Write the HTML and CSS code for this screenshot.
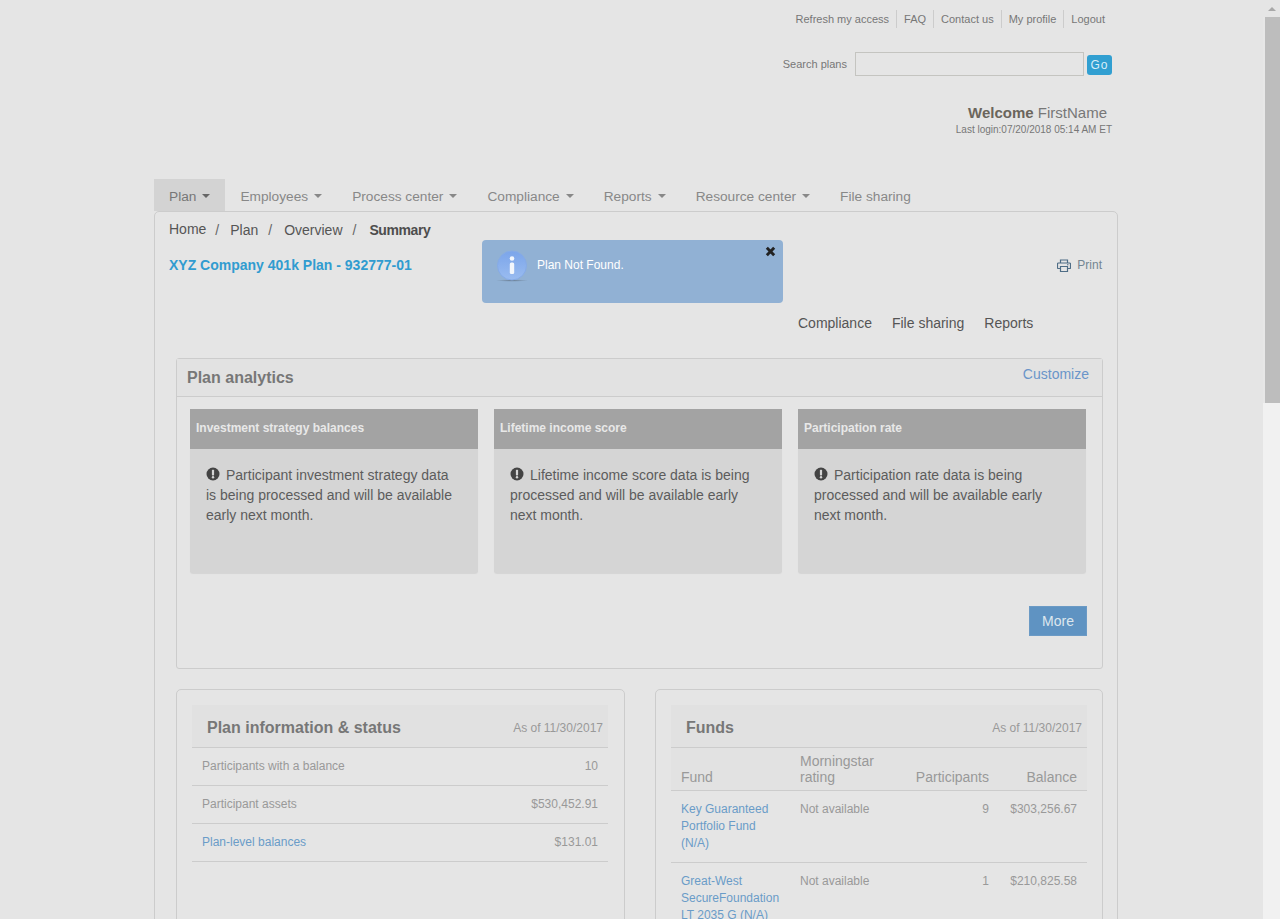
FILE: index.html
```html
<!DOCTYPE html>
<html lang="en">
<head>
<meta charset="utf-8">
<title>Plan Summary</title>
<link rel="stylesheet" href="styles.css">
</head>
<body>
<div class="page">
  <div class="wrap">
    <header class="site-head">
      <ul class="top-links">
        <li>Refresh my access</li><li>FAQ</li><li>Contact us</li><li>My profile</li><li>Logout</li>
      </ul>
      <div class="search">
        <label class="search-label">Search plans</label>
        <input class="search-input" type="text">
        <button class="go">Go</button>
      </div>
      <div class="welcome"><b>Welcome</b> FirstName</div>
      <div class="last-login">Last login:07/20/2018 05:14 AM ET</div>
    </header>

    <nav class="tabs">
      <a class="tab active">Plan<i class="caret"></i></a>
      <a class="tab">Employees<i class="caret"></i></a>
      <a class="tab">Process center<i class="caret"></i></a>
      <a class="tab">Compliance<i class="caret"></i></a>
      <a class="tab">Reports<i class="caret"></i></a>
      <a class="tab">Resource center<i class="caret"></i></a>
      <a class="tab">File sharing</a>
    </nav>

    <main class="panel">
      <div class="crumbs">
        <span class="crumb-home">Home</span><span class="sep sep-first">/</span><span>Plan</span><span class="sep">/</span><span>Overview</span><span class="sep">/</span><b>Summary</b>
      </div>
      <div class="title-row">
        <a class="plan-title">XYZ Company 401k Plan - 932777-01</a>
        <a class="print">
          <svg class="print-icon" viewBox="0 0 14 13" width="14" height="13" aria-hidden="true"><path d="M3.5 4V1h7v3M3.5 9.5H1.2a.7.7 0 0 1-.7-.7V5a1 1 0 0 1 1-1h11a1 1 0 0 1 1 1v3.800a.7.700 0 0 1-.7.7h-2.300M3.500 7.500h7v5h-7z" fill="none" stroke="#4f6d86" stroke-width="1.200"/><circle cx="10.800" cy="5.800" r=".7" fill="#4f6d86"/></svg>
          Print
        </a>
      </div>
      <div class="alert">
        <svg class="alert-icon" viewBox="0 0 32 32" width="32" height="32" aria-hidden="true">
          <defs>
            <linearGradient id="infoFill" x1="0" y1="0" x2="0" y2="1"><stop offset="0" stop-color="#7ba5ea"/><stop offset="1" stop-color="#9abcf0"/></linearGradient>
            <radialGradient id="infoShade" cx=".5" cy=".5" r=".5"><stop offset="0" stop-color="#5f6f80" stop-opacity=".75"/><stop offset="1" stop-color="#5f6f80" stop-opacity="0"/></radialGradient>
          </defs>
          <ellipse cx="16" cy="30.500" rx="16" ry="1.300" fill="url(#infoShade)"/>
          <circle cx="16" cy="15.500" r="14.500" fill="url(#infoFill)" stroke="#86abe6" stroke-width="1"/>
          <circle cx="16" cy="8.500" r="2.300" fill="#f2f6fc"/>
          <rect x="13.800" y="12.500" width="4.400" height="11.500" rx="1.500" fill="#f2f6fc"/>
        </svg>
        <span class="alert-text">Plan Not Found.</span>
        <svg class="alert-close" viewBox="0 0 12 12" width="11" height="11" aria-hidden="true"><path d="M2 2 10 10M10 2 2 10" stroke="#222" stroke-width="3.200"/></svg>
      </div>
      <div class="subnav"><a>Compliance</a><a>File sharing</a><a>Reports</a></div>

      <section class="analytics">
        <div class="analytics-head">
          <h2 class="analytics-title">Plan analytics</h2>
          <a class="customize">Customize</a>
        </div>
        <div class="cards">
          <article class="card">
            <h3 class="card-head">Investment strategy balances</h3>
            <p class="card-body"><svg class="warn" viewBox="0 0 14 14" width="14" height="14" aria-hidden="true"><circle cx="7" cy="7" r="6.500" fill="#444"/><rect x="5.900" y="2.800" width="2.200" height="5.600" rx=".6" fill="#d5d5d5"/><circle cx="7" cy="10.300" r="1.200" fill="#d5d5d5"/></svg>Participant investment strategy data is being processed and will be available early next month.</p>
          </article>
          <article class="card">
            <h3 class="card-head">Lifetime income score</h3>
            <p class="card-body"><svg class="warn" viewBox="0 0 14 14" width="14" height="14" aria-hidden="true"><circle cx="7" cy="7" r="6.500" fill="#444"/><rect x="5.900" y="2.800" width="2.200" height="5.600" rx=".6" fill="#d5d5d5"/><circle cx="7" cy="10.300" r="1.200" fill="#d5d5d5"/></svg>Lifetime income score data is being processed and will be available early next month.</p>
          </article>
          <article class="card">
            <h3 class="card-head">Participation rate</h3>
            <p class="card-body"><svg class="warn" viewBox="0 0 14 14" width="14" height="14" aria-hidden="true"><circle cx="7" cy="7" r="6.500" fill="#444"/><rect x="5.900" y="2.800" width="2.200" height="5.600" rx=".6" fill="#d5d5d5"/><circle cx="7" cy="10.300" r="1.200" fill="#d5d5d5"/></svg>Participation rate data is being processed and will be available early next month.</p>
          </article>
        </div>
        <div class="more-row"><button class="more">More</button></div>
      </section>

      <div class="lower">
        <section class="box box-left">
          <div class="box-head"><h2 class="box-title">Plan information &amp; status</h2><span class="as-of">As of 11/30/2017</span></div>
          <div class="info-row"><span>Participants with a balance</span><span>10</span></div>
          <div class="info-row"><span>Participant assets</span><span>$530,452.91</span></div>
          <div class="info-row"><a class="link">Plan-level balances</a><span>$131.01</span></div>
        </section>
        <section class="box">
          <div class="box-head"><h2 class="box-title">Funds</h2><span class="as-of">As of 11/30/2017</span></div>
          <table class="funds">
            <colgroup><col class="c1"><col class="c2"><col class="c3"><col class="c4"></colgroup>
            <thead><tr><th>Fund</th><th>Morningstar rating</th><th class="num">Participants</th><th class="num">Balance</th></tr></thead>
            <tbody>
              <tr><td><a class="link">Key Guaranteed Portfolio Fund (N/A)</a></td><td>Not available</td><td class="num">9</td><td class="num">$303,256.67</td></tr>
              <tr><td><a class="link">Great-West SecureFoundation LT 2035 G (N/A)</a></td><td>Not available</td><td class="num">1</td><td class="num">$210,825.58</td></tr>
            </tbody>
          </table>
        </section>
      </div>
    </main>
  </div>
</div>
<div class="scrollbar">
  <div class="scroll-btn"><i class="scroll-arrow"></i></div>
  <div class="scroll-thumb"></div>
</div>
</body>
</html>
```
FILE: styles.css
```css
* { box-sizing: border-box; }
html, body { margin: 0; height: 919px; overflow: hidden; }
body {
  display: flex;
  background: #e5e5e5;
  font-family: "Liberation Sans", Arial, sans-serif;
  color: #888;
}
.page { width: 1263px; height: 919px; overflow: hidden; flex: none; }
.wrap { width: 964px; margin-left: 154px; }

.scrollbar { width: 17px; height: 919px; background: #f1f1f1; flex: none; }
.scroll-btn { height: 17px; background: #e5e5e5; display: flex; align-items: center; justify-content: center; }
.scroll-arrow { width: 0; height: 0; border-left: 4px solid transparent; border-right: 4px solid transparent; border-bottom: 4px solid #a8a8a8; }
.scroll-thumb { width: 17px; height: 386px; background: #bdbdbd; border-left: 2px solid #e7e7e7; }

.site-head { height: 179px; padding-top: 10px; display: flex; flex-direction: column; align-items: flex-end; }
.top-links { list-style: none; margin: 0; padding: 0 6px 0 0; display: flex; font-size: 11px; color: #777; }
.top-links li { height: 18px; line-height: 18px; padding: 0 7px; border-left: 1px solid #ccc; }
.top-links li:first-child { border-left: 0; }
.search { display: flex; align-items: center; margin-top: 24px; padding-right: 6px; height: 24px; }
.search-label { font-size: 11px; color: #777; margin-right: 8px; }
.search-input { width: 229px; height: 24px; background: #e5e5e5; border: 1px solid #c4c4c0; margin: 0; padding: 0; }
.go { width: 25px; height: 20px; margin: 2px 0 0 3px; padding: 0; border: 0; border-radius: 3px; background: #319fd1; color: #d8eef8; font: 12px "Liberation Sans", Arial, sans-serif; letter-spacing: 1px; }
.welcome { margin-top: 28px; padding-right: 11px; font-size: 15px; line-height: 18px; color: #777; }
.welcome b { color: #6b655c; }
.last-login { margin-top: 2px; padding-right: 6px; font-size: 10px; line-height: 12px; color: #777; }

.tabs { display: flex; height: 32px; }
.tab { display: block; height: 32px; padding: 1px 15px 0; font-size: 13.700px; line-height: 34px; color: #888; }
.tab.active { background: #d3d3d3; color: #777; }
.caret { display: inline-block; width: 0; height: 0; margin-left: 6px; vertical-align: 3px; border-left: 4px solid transparent; border-right: 4px solid transparent; border-top: 4px solid #888; }
.tab.active .caret { border-top-color: #666; }

.panel { position: relative; height: 800px; border: 1px solid #ccc; border-radius: 5px 5px 0 0; }
.crumbs { height: 35px; padding: 9px 0 0 14px; font-size: 14px; line-height: 18px; color: #555; display: flex; }
.crumb-home { position: relative; top: -1px; }
.sep { margin: 0 12px 0 10px; color: #666; }
.sep-first { margin: 0 11px 0 9px; }
.crumbs b { margin-left: 1px; color: #4d4d4d; letter-spacing: -.4px; }
.title-row { height: 50px; padding: 8px 15px 0 14px; display: flex; justify-content: space-between; align-items: flex-start; }
.plan-title { font-size: 14px; font-weight: bold; line-height: 20px; color: #319cd0; }
.print { display: flex; align-items: center; gap: 6px; font-size: 12px; line-height: 20px; color: #738592; }
.print-icon { display: block; }

.alert { position: absolute; left: 327px; top: 28px; width: 301px; height: 63px; background: #91b1d4; border-radius: 4px; }
.alert-icon { position: absolute; left: 14px; top: 10px; }
.alert-text { position: absolute; left: 55px; top: 18px; font-size: 12px; line-height: 15px; color: #fff; }
.alert-close { position: absolute; left: 283px; top: 6px; }

.subnav { height: 61px; padding: 16px 0 0 643px; display: flex; gap: 20px; font-size: 14px; line-height: 20px; color: #555; }

.analytics { height: 311px; margin: 0 14px 0 21px; border: 1px solid #ccc; border-radius: 3px; }
.analytics-head { height: 38px; background: #e2e2e2; border-bottom: 1px solid #ccc; padding: 0 13px 0 10px; display: flex; justify-content: space-between; }
.analytics-title { margin: 0; font-size: 16px; line-height: 37px; color: #777; }
.customize { font-size: 14px; line-height: 30px; color: #6a95c9; }
.cards { display: flex; gap: 16px; padding: 12px 0 0 13px; }
.card { width: 288px; }
.card-head { margin: 0; height: 40px; padding-left: 6px; background: #a3a3a3; color: #e8e8e8; font-size: 12px; line-height: 38px; font-weight: bold; }
.card-body { margin: 0; height: 124px; padding: 16px 16px 0; background: #d5d5d5; border-radius: 0 0 3px 3px; box-shadow: 0 1px 1px rgba(0,0,0,.07); font-size: 14px; line-height: 20px; color: #5c5c5c; }
.warn { margin-right: 6px; vertical-align: -1px; }
.more-row { display: flex; justify-content: flex-end; padding: 33px 15px 0 0; }
.more { width: 58px; height: 30px; padding: 0; background: #5f93c2; border: 1px solid #6b9ac5; color: #dde7ee; font: 14px "Liberation Sans", Arial, sans-serif; }

.lower { display: grid; grid-template-columns: 449px 448px; column-gap: 30px; margin: 20px 0 0 21px; }
.box { height: 400px; padding: 15px 15px 0; border: 1px solid #ccc; border-radius: 5px; }
.box-left { padding-right: 16px; }
.box-head { height: 43px; background: #e1e1e1; border-bottom: 1px solid #ccc; padding: 0 5px 0 15px; display: flex; justify-content: space-between; align-items: center; }
.box-title { margin: 0; font-size: 16px; line-height: 42px; padding-top: 4px; color: #777; }
.as-of { font-size: 12px; color: #999; padding-top: 3px; }
.info-row { height: 38px; padding: 0 10px 2px; border-bottom: 1px solid #ccc; display: flex; justify-content: space-between; align-items: center; font-size: 12px; color: #999; }
.link { color: #6a9cc8; }

.funds { width: 416px; table-layout: fixed; border-collapse: collapse; background: none; }
.c1 { width: 119px; }
.c2 { width: 110px; }
.c3 { width: 99px; }
.c4 { width: 88px; }
.funds th { padding: 5px 10px; border-bottom: 1px solid #ccc; background: #e2e2e2; font-size: 14px; line-height: 16px; font-weight: normal; color: #999; text-align: left; vertical-align: bottom; }
.funds td { padding: 10px 10px; border-bottom: 1px solid #ccc; font-size: 12px; line-height: 17px; color: #999; vertical-align: top; }
.funds td.num, .funds th.num { text-align: right; }
```
